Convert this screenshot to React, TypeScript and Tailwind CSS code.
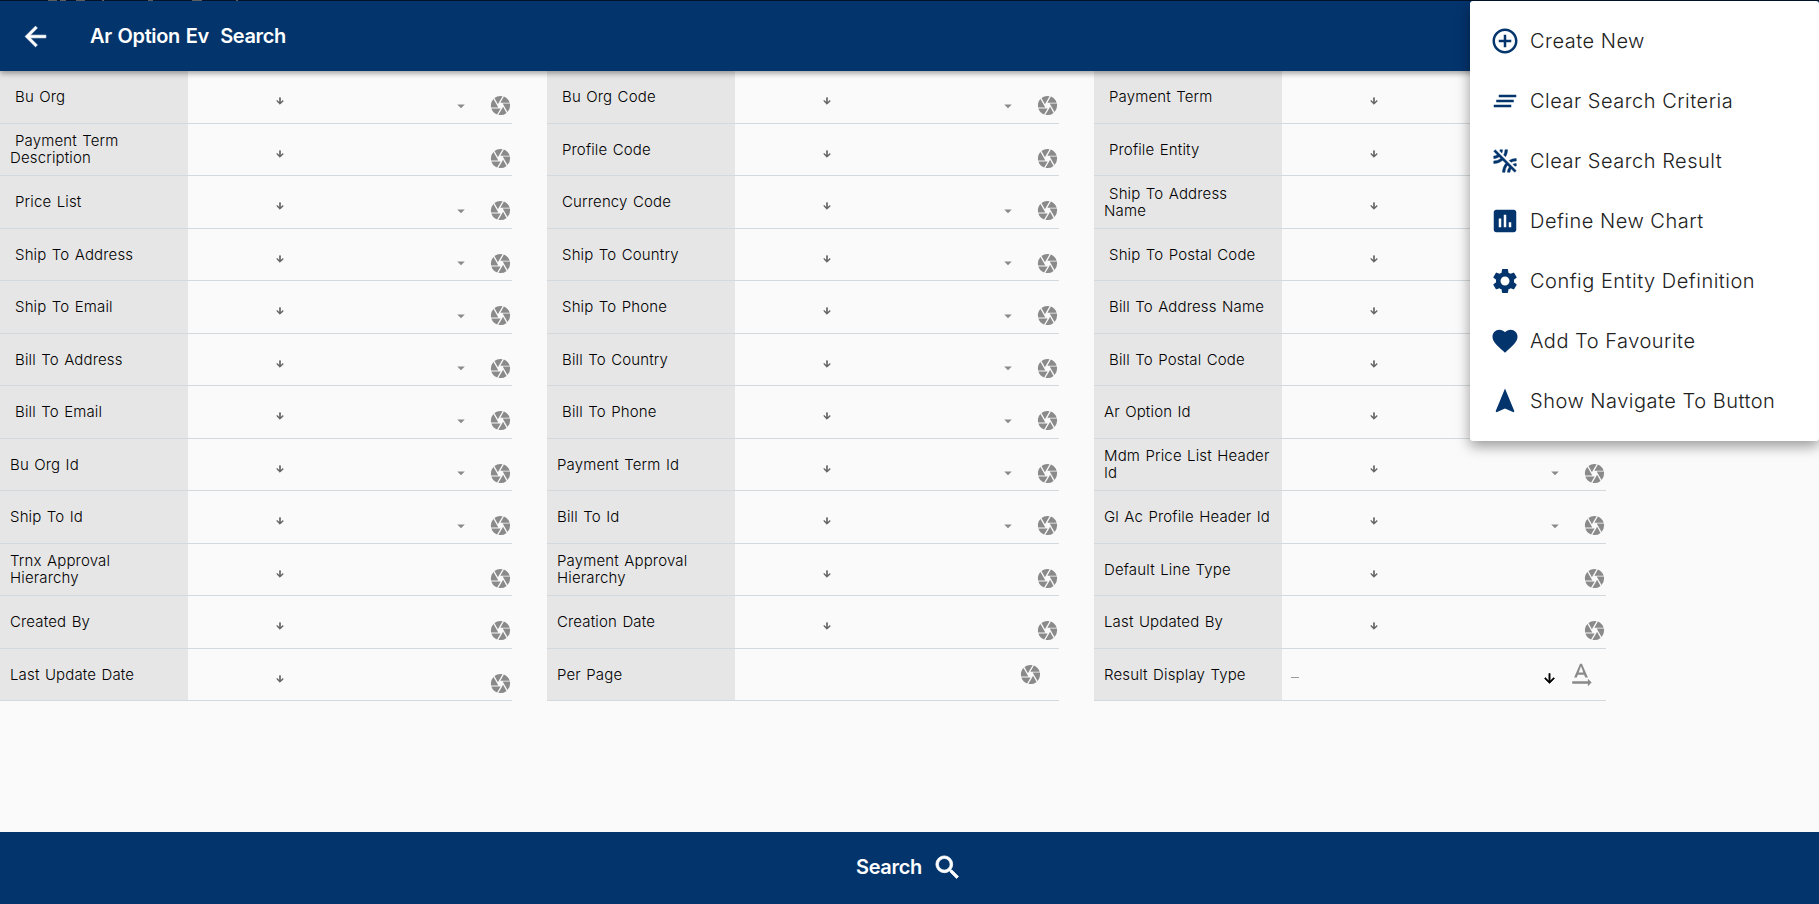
import React from "react";
import {
  MdAddCircleOutline,
  MdArrowBack,
  MdArrowDownward,
  MdArrowDropDown,
  MdCamera,
  MdClearAll,
  MdFavorite,
  MdInsertChart,
  MdLeakRemove,
  MdNavigation,
  MdSearch,
  MdSettings,
  MdTextRotationNone,
} from "react-icons/md";

type Field = { label: string; indent?: boolean; kind?: "select" | "perPage" | "display" };

const columns: Field[][] = [
  [
    { label: "Bu Org", indent: true, kind: "select" },
    { label: "Payment Term Description", indent: true },
    { label: "Price List", indent: true, kind: "select" },
    { label: "Ship To Address", indent: true, kind: "select" },
    { label: "Ship To Email", indent: true, kind: "select" },
    { label: "Bill To Address", indent: true, kind: "select" },
    { label: "Bill To Email", indent: true, kind: "select" },
    { label: "Bu Org Id", kind: "select" },
    { label: "Ship To Id", kind: "select" },
    { label: "Trnx Approval Hierarchy" },
    { label: "Created By" },
    { label: "Last Update Date" },
  ],
  [
    { label: "Bu Org Code", indent: true, kind: "select" },
    { label: "Profile Code", indent: true },
    { label: "Currency Code", indent: true, kind: "select" },
    { label: "Ship To Country", indent: true, kind: "select" },
    { label: "Ship To Phone", indent: true, kind: "select" },
    { label: "Bill To Country", indent: true, kind: "select" },
    { label: "Bill To Phone", indent: true, kind: "select" },
    { label: "Payment Term Id", kind: "select" },
    { label: "Bill To Id", kind: "select" },
    { label: "Payment Approval Hierarchy" },
    { label: "Creation Date" },
    { label: "Per Page", kind: "perPage" },
  ],
  [
    { label: "Payment Term", indent: true, kind: "select" },
    { label: "Profile Entity", indent: true },
    { label: "Ship To Address Name", indent: true, kind: "select" },
    { label: "Ship To Postal Code", indent: true, kind: "select" },
    { label: "Bill To Address Name", indent: true, kind: "select" },
    { label: "Bill To Postal Code", indent: true, kind: "select" },
    { label: "Ar Option Id", kind: "select" },
    { label: "Mdm Price List Header Id", kind: "select" },
    { label: "Gl Ac Profile Header Id", kind: "select" },
    { label: "Default Line Type" },
    { label: "Last Updated By" },
    { label: "Result Display Type", kind: "display" },
  ],
];

const menu = [
  { label: "Create New", Icon: MdAddCircleOutline },
  { label: "Clear Search Criteria", Icon: MdClearAll },
  { label: "Clear Search Result", Icon: MdLeakRemove, heavy: true },
  { label: "Define New Chart", Icon: MdInsertChart },
  { label: "Config Entity Definition", Icon: MdSettings },
  { label: "Add To Favourite", Icon: MdFavorite },
  { label: "Show Navigate To Button", Icon: MdNavigation },
];

function Control({ kind }: { kind?: Field["kind"] }) {
  if (kind === "perPage") {
    return (
      <div className="flex flex-1 items-center justify-end pr-[17px]">
        <MdCamera className="size-[23px] text-[#8a8a8a]" />
      </div>
    );
  }
  if (kind === "display") {
    return (
      <div className="flex flex-1 items-center pr-[10px] pl-[9px]">
        <span className="h-px w-2 translate-y-[3px] bg-[#9a9a9a]" />
        <MdArrowDownward className="mt-[9px] ml-auto size-[15px] stroke-1 text-black [&_[fill=none]]:stroke-none" />
        <MdTextRotationNone className="mt-0.5 ml-[9px] size-[30px] text-[#8a8a8a]" />
      </div>
    );
  }
  return (
    <div className="flex flex-1 items-center pt-[18px]">
      <MdArrowDownward className="mb-[9px] ml-[87.5px] size-[10px] stroke-[1.5] text-[#555] [&_[fill=none]]:stroke-none" />
      {kind === "select" && <MdArrowDropDown className="ml-[167px] size-[18px] text-[#8a8a8a]" />}
      <MdCamera className="ml-auto size-[23px] text-[#8a8a8a]" />
    </div>
  );
}

export default function App() {
  return (
    <div className="relative flex h-[904px] w-full flex-col overflow-hidden bg-[#fafafa] font-['Inter','Open_Sans',sans-serif]">
      <div className="flex h-px shrink-0 bg-[#021530] pl-12">
        <span className="w-[9px] bg-[#666]" />
        <span className="ml-[3px] w-1.5 bg-[#666]" />
        <span className="ml-2.5 w-[9px] bg-[#666]" />
        <span className="ml-[17px] w-0.5 bg-[#666]" />
        <span className="ml-[44px] w-[5px] bg-[#666]" />
        <span className="ml-[39px] w-2.5 bg-[#666]" />
        <span className="ml-[34px] w-0.5 bg-[#666]" />
      </div>
      <header className="z-10 flex h-[70px] shrink-0 items-center bg-[#03346c] pl-5 text-white shadow-[0_2px_6px_rgba(0,0,0,0.4)]">
        <MdArrowBack className="size-[31px] stroke-[0.6] [&_[fill=none]]:stroke-none" />
        <h1 className="ml-[39px] text-[20px] font-semibold tracking-[-0.35px] whitespace-pre [word-spacing:1px]">Ar Option Ev  Search</h1>
      </header>

      <main className="flex flex-1 gap-[35px]">
        {columns.map((fields, c) => (
          <div key={c} className="w-[512px]">
            {fields.map((f) => (
              <div key={f.label} className="flex h-[52.5px] border-b border-[#d3d9dc]">
                <div className="flex w-[187.5px] items-center bg-[#e6e6e6] pr-[10px] pl-2.5 text-[15px] leading-[17px] font-light tracking-[0.15px] text-black [word-spacing:1px]">
                  <span className={f.indent ? "indent-[5px]" : ""}>{f.label}</span>
                </div>
                <Control kind={f.kind} />
              </div>
            ))}
          </div>
        ))}
      </main>

      <footer className="flex h-[72px] shrink-0 items-center justify-center gap-2.5 bg-[#03346c] pb-0.5 text-white">
        <span className="text-[20px] font-semibold tracking-[-0.3px]">Search</span>
        <MdSearch className="size-[31px] stroke-[0.6] [&_[fill=none]]:stroke-none" />
      </footer>

      <nav className="absolute top-px right-0 z-20 flex h-[440px] w-[349px] flex-col rounded-[3px] bg-white py-2.5 pl-5 shadow-[0_5px_14px_rgba(0,0,0,0.4)]">
        {menu.map(({ label, Icon, heavy }) => (
          <div key={label} className="flex h-[60px] items-center gap-2.5">
            <Icon
              className={
                heavy
                  ? "size-[30px] stroke-[0.4] text-[#03346c] [&_[fill=none]]:stroke-none"
                  : "size-[30px] text-[#03346c]"
              }
            />
            <span className="text-[20px] font-light tracking-[0.5px] text-[#212121]">{label}</span>
          </div>
        ))}
      </nav>
    </div>
  );
}
